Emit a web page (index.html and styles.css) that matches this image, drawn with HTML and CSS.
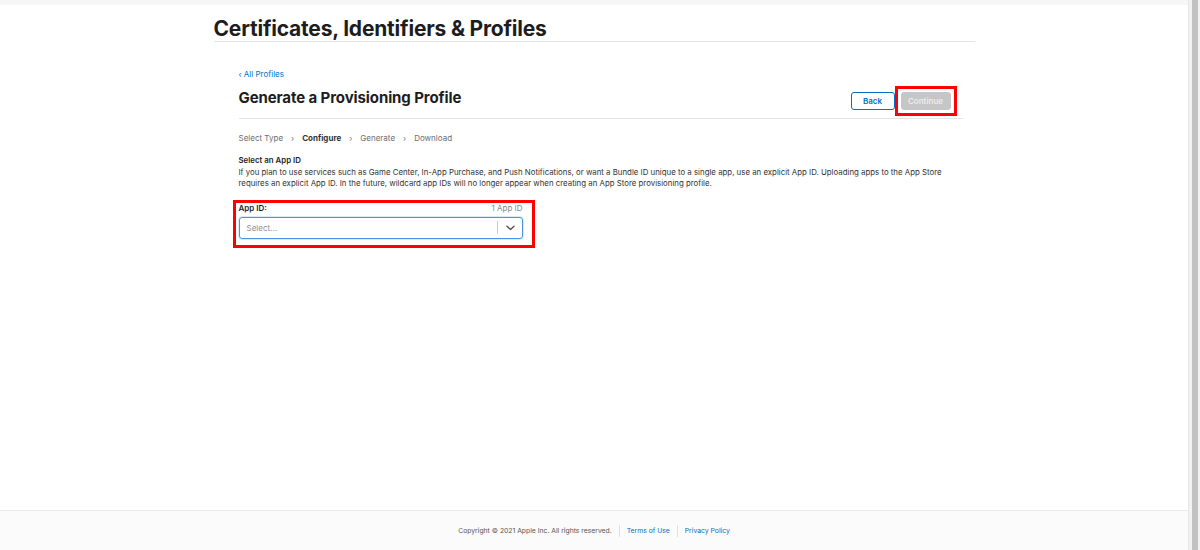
FILE: index.html
```html
<!DOCTYPE html>
<html lang="en">
  <head>
    <meta charset="UTF-8" />
    <meta name="viewport" content="width=device-width" />
    <title>Certificates, Identifiers &amp; Profiles</title>
    <link rel="stylesheet" href="styles.css">
  </head>
  <body>
    <div class="window">
      <div class="page">
        <div class="topbar"></div>

        <main class="main">
          <header class="page-header">
            <h1>Certificates, Identifiers &amp; Profiles</h1>
          </header>

          <section class="content">
            <a class="back-link" href="#">‹ All Profiles</a>

            <div class="title-row">
              <h2>Generate a Provisioning Profile</h2>
              <div class="actions">
                <button class="btn btn-back">Back</button>
                <span class="highlight highlight-btn">
                  <button class="btn btn-continue" disabled>Continue</button>
                </span>
              </div>
            </div>

            <ol class="steps">
              <li>Select Type</li>
              <li class="sep">›</li>
              <li class="current">Configure</li>
              <li class="sep">›</li>
              <li>Generate</li>
              <li class="sep">›</li>
              <li>Download</li>
            </ol>

            <div class="intro">
              <h3>Select an App ID</h3>
              <p>
                If you plan to use services such as Game Center, In-App Purchase, and Push Notifications, or want a Bundle ID unique to a single app, use an explicit App ID. Uploading apps to the App Store<br>
                requires an explicit App ID. In the future, wildcard app IDs will no longer appear when creating an App Store provisioning profile.
              </p>
            </div>

            <div class="highlight highlight-field">
              <div class="field">
                <div class="field-head">
                  <label>App ID:</label>
                  <span class="count">1 App ID</span>
                </div>
                <div class="select">
                  <span class="placeholder">Select...</span>
                  <span class="select-divider"></span>
                  <svg class="chevron" width="9" height="6" viewBox="0 0 9 6">
                    <path d="M1 1.2l3.5 3.3 3.5-3.3" fill="none" stroke="#555" stroke-width="1.4" stroke-linecap="round" stroke-linejoin="round"/>
                  </svg>
                </div>
              </div>
            </div>
          </section>
        </main>

        <footer class="footer">
          <span>Copyright © 2021 Apple Inc. All rights reserved.</span>
          <span class="footer-sep"></span>
          <a href="#">Terms of Use</a>
          <span class="footer-sep"></span>
          <a href="#">Privacy Policy</a>
        </footer>
      </div>

      <div class="scrollbar"><div class="thumb"></div></div>
    </div>
  </body>
</html>
```

FILE: styles.css
```css
:root {
  --text-color: #1d1d1f;
  --muted-color: #6e6e73;
  --link-color: #0070c9;
  --line-color: #e5e5e5;
  --mark-color: #ff0000;
}

html,
body {
  margin: 0;
  height: 100%;
}

body {
  font-family: Inter, "Liberation Sans", sans-serif;
  color: var(--text-color);
  background-color: #ffffff;
}

a {
  color: var(--link-color);
  text-decoration: none;
}

h1,
h2,
h3,
p,
ol {
  margin: 0;
  padding: 0;
}

.window {
  display: flex;
  height: 550px;
}

.page {
  flex: 1;
  display: flex;
  flex-direction: column;
}

.topbar {
  height: 5px;
  background-color: #f6f6f6;
}

.main {
  flex: 1;
  width: 761px;
  margin: 0 auto;
}

.page-header {
  padding-top: 11px;
  border-bottom: 1px solid var(--line-color);
}

.page-header h1 {
  font-size: 21px;
  line-height: 25px;
  font-weight: 700;
  letter-spacing: -0.2px;
}

.content {
  width: 724px;
  padding: 26px 0 0 25px;
}

.back-link {
  display: block;
  font-size: 8px;
  line-height: 12px;
}

.title-row {
  display: flex;
  align-items: flex-start;
  justify-content: space-between;
  box-sizing: border-box;
  height: 36px;
  margin-top: 3px;
  padding-top: 5px;
  border-bottom: 1px solid var(--line-color);
}

.title-row h2 {
  font-size: 15px;
  line-height: 20px;
  font-weight: 700;
  letter-spacing: -0.1px;
}

.actions {
  display: flex;
  align-items: center;
  gap: 0;
  margin-right: 6px;
  margin-top: -2px;
}

.btn {
  font-family: inherit;
  font-size: 8px;
  font-weight: 600;
  height: 18px;
  padding: 0;
  border-radius: 3px;
}

.btn-back {
  width: 44px;
  color: var(--link-color);
  background-color: #ffffff;
  border: 1px solid var(--link-color);
}

.btn-continue {
  width: 50px;
  color: #ececec;
  background-color: #c6c6c6;
  border: 1px solid #c6c6c6;
}

.highlight {
  border: 3px solid var(--mark-color);
}

.highlight-btn {
  display: flex;
  padding: 3px;
}

.steps {
  display: flex;
  gap: 8px;
  list-style: none;
  margin-top: 13px;
  font-size: 8px;
  line-height: 12px;
  color: var(--muted-color);
}

.steps .current {
  font-weight: 700;
  color: #333333;
}

.steps .sep {
  color: #777777;
}

.intro {
  margin-top: 11px;
  font-size: 7.85px;
  line-height: 11.5px;
}

.intro h3 {
  font-size: 7.85px;
  font-weight: 600;
}

.intro p {
  color: #333333;
}

.highlight-field {
  width: 284px;
  margin: 10px 0 0 -6px;
  padding: 0 9px 6px 3px;
}

.field-head {
  display: flex;
  justify-content: space-between;
  align-items: flex-end;
  font-size: 8px;
  line-height: 11px;
  margin-bottom: 3px;
}

.field-head label {
  font-weight: 600;
}

.field-head .count {
  color: #86868b;
}

.select {
  display: flex;
  align-items: center;
  box-sizing: border-box;
  height: 22px;
  border: 1px solid #4a94e4;
  border-radius: 3px;
  padding-left: 7px;
  box-shadow: 0 0 0 1px rgba(74, 148, 228, 0.2);
}

.placeholder {
  flex: 1;
  font-size: 8px;
  color: #8e8e93;
}

.select-divider {
  width: 1px;
  height: 13px;
  background-color: #cccccc;
}

.chevron {
  margin: 0 7px 0 8px;
}

.footer {
  display: flex;
  align-items: center;
  justify-content: center;
  gap: 7px;
  height: 39px;
  border-top: 1px solid #ececec;
  background-color: #fbfbfb;
  font-size: 6.8px;
  color: #555555;
}

.footer-sep {
  width: 1px;
  height: 12px;
  background-color: #e0e0e0;
}

.scrollbar {
  width: 11px;
  background-color: #f2f2f2;
  border-left: 1px solid #e6e6e6;
  display: flex;
  justify-content: center;
}

.scrollbar .thumb {
  width: 6px;
  background-color: #c2c2c2;
}
```
